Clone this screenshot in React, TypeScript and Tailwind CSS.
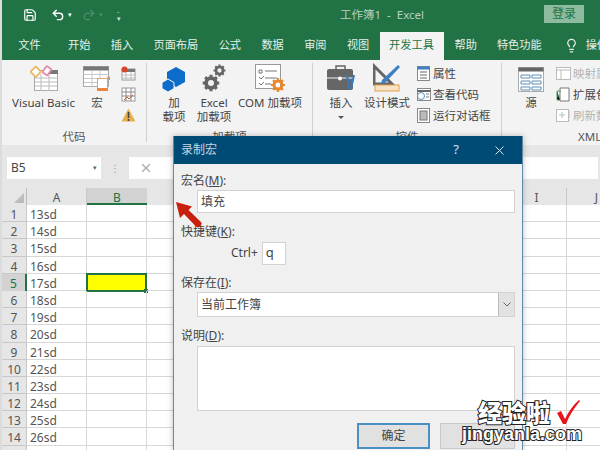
import { Lightbulb, Save, Undo2, Redo2, X } from "lucide-react";

const tabs = [
  { label: "文件", className: "mr-[7px]" },
  { label: "开始" },
  { label: "插入" },
  { label: "页面布局" },
  { label: "公式" },
  { label: "数据" },
  { label: "审阅" },
  { label: "视图" },
];

const rows = ["13sd", "14sd", "15sd", "16sd", "17sd", "18sd", "19sd", "20sd", "21sd", "22sd", "23sd", "24sd", "25sd", "26sd", "27sd"];
const cols = ["A", "B", "C", "D", "E", "F", "G", "H", "I", "J"];

function BigButton({ width, lines, icon, caret }: { width: string; lines: string[]; icon: React.ReactNode; caret?: boolean }) {
  return (
    <div className={`flex flex-col items-center shrink-0 ${width}`}>
      <div className="h-[33px] pb-[4px] flex items-end justify-center">{icon}</div>
      <div className="text-[11.5px] leading-[14px] text-[#444] text-center whitespace-nowrap">
        {lines.map((l) => (
          <div key={l}>{l}</div>
        ))}
      </div>
      {caret ? <div className="mt-[6px] w-0 h-0 border-x-[3px] border-t-[3px] border-x-transparent border-t-[#555]" /> : null}
    </div>
  );
}

function SmallRow({ icon, label, muted }: { icon: React.ReactNode; label: string; muted?: boolean }) {
  return (
    <div className={`flex items-center gap-[2px] h-[21px] text-[11.5px] whitespace-nowrap ${muted ? "text-[#b4b4b4]" : "text-[#444]"}`}>
      <div className="w-[15px] flex justify-center shrink-0">{icon}</div>
      <span>{label}</span>
    </div>
  );
}

function Group({ width, label, children }: { width: string; label: string; children: React.ReactNode }) {
  return (
    <div className={`flex flex-col shrink-0 my-[3px] h-[79px] border-r border-[#d0d0d0] ${width}`}>
      <div className="flex h-[66px] shrink-0">{children}</div>
      <div className="text-center text-[11.5px] leading-[16px] text-[#555] whitespace-nowrap">{label}</div>
    </div>
  );
}

function TableIcon() {
  return (
    <svg width="28" height="28" viewBox="0 0 28 28">
      <rect x="4.5" y="6.5" width="23" height="20" fill="#fff" stroke="#aaa" />
      <rect x="14" y="6" width="14" height="4" fill="#777" />
      <path d="M5 14h22M5 18h22M5 22h22M11 10v17M19 10v17" stroke="#bbb" />
      <rect x="2" y="4" width="7.5" height="7.5" rx="1" transform="rotate(45 5.75 7.75)" fill="#fff" stroke="#e8b866" strokeWidth="1.8" />
      <rect x="14" y="3" width="6" height="7.5" rx="1" transform="rotate(35 17 6.75)" fill="#fff" stroke="#e58aa6" strokeWidth="1.8" />
    </svg>
  );
}

function MacroIcon() {
  return (
    <svg width="28" height="26" viewBox="0 0 28 26">
      <rect x="0.5" y="0.5" width="25" height="20" fill="#fff" stroke="#aaa" />
      <rect x="0.5" y="0.5" width="25" height="4" fill="#777" />
      <path d="M1 8.5h24M1 12.5h24M1 16.5h24M9 5v16M17 5v16" stroke="#c8c8c8" />
      <rect x="14.5" y="12.5" width="10" height="12" fill="#fff" stroke="#e8a060" />
      <rect x="14" y="22" width="11" height="3" fill="#e8843c" />
      <path d="M24 11h2.5v3" stroke="#e8843c" fill="none" />
    </svg>
  );
}

function GearIcon({ size, color }: { size: number; color: string }) {
  return (
    <svg width={size} height={size} viewBox="0 0 24 24">
      <circle cx="12" cy="12" r="6.5" fill="none" stroke={color} strokeWidth="5" />
      <path d="M12 1v22M1 12h22M4.2 4.2l15.6 15.6M19.8 4.2L4.2 19.8" stroke={color} strokeWidth="4" strokeDasharray="4.4 13.2" />
    </svg>
  );
}

function App() {
  return (
    <div className="relative w-[600px] h-[450px] overflow-hidden bg-white font-['Noto_Sans','Noto_Sans_CJK_SC',sans-serif] flex">
      <div className="w-[2px] shrink-0 bg-[#dcdcdc]" />
      <div className="flex-1 min-w-0 flex flex-col">
        {/* title bar */}
        <div className="h-[30px] bg-[#217346] flex items-center shrink-0 relative text-white">
          <Save size={14} className="ml-[21px]" strokeWidth={2} />
          <Undo2 size={14} className="ml-[14px]" strokeWidth={2.4} />
          <span className="ml-[3px] text-[7px]">▾</span>
          <Redo2 size={14} className="ml-[10px] text-[#4f9069]" strokeWidth={2} />
          <span className="ml-[3px] text-[7px] text-[#4f9069]">▾</span>
          <span className="ml-[14px] text-[7px] leading-[7px] text-[#cfe0d5]">
            -<br />▾
          </span>
          <div className="absolute left-[338px] text-[11.5px] text-[#b5d2c0] whitespace-nowrap">工作簿1&nbsp; -&nbsp; Excel</div>
          <div className="absolute left-[542px] top-[5px] w-[40px] h-[18px] bg-[#8dbb9f] text-[#217346] text-[12px] leading-[18px] text-center">登录</div>
        </div>
        {/* tabs */}
        <div className="h-[30px] bg-[#217346] flex items-end shrink-0 pl-[6px] text-[11.2px] text-[#e6f0ea] whitespace-nowrap overflow-hidden">
          {tabs.map((t) => (
            <div key={t.label} className={`shrink-0 h-[28px] leading-[26px] px-[10.2px] ${t.className ?? ""}`}>
              {t.label}
            </div>
          ))}
          <div className="shrink-0 h-[28px] leading-[26px] w-[64px] text-center bg-[#f3f3f3] text-[#217346]">开发工具</div>
          <div className="shrink-0 h-[28px] leading-[26px] px-[11px]">帮助</div>
          <div className="shrink-0 h-[28px] leading-[26px] px-[9px]">特色功能</div>
          <div className="shrink-0 h-[28px] flex items-center pb-[2px] pl-[13px] gap-[7px]">
            <Lightbulb size={15} />
            <span>操作</span>
          </div>
        </div>
        {/* ribbon */}
        <div className="h-[85px] bg-[#f3f3f3] flex shrink-0 overflow-hidden">
          <Group width="w-[145px]" label="代码">
            <BigButton width="w-[75px] ml-[4px]" lines={["Visual Basic"]} icon={<TableIcon />} />
            <BigButton width="w-[32px]" lines={["宏"]} icon={<MacroIcon />} />
            <div className="flex flex-col gap-[6px] pt-[3px] ml-[8px]">
              <svg width="15" height="15" viewBox="0 0 15 15">
                <rect x="1" y="3" width="13" height="11" fill="#fff" stroke="#999" />
                <rect x="1" y="3" width="13" height="3" fill="#777" />
                <path d="M1 9h13M1 12h13M5 6v8M10 6v8" stroke="#bbb" />
                <circle cx="3.5" cy="3.5" r="3" fill="#d9472b" />
              </svg>
              <svg width="15" height="15" viewBox="0 0 15 15">
                <rect x="1" y="1" width="13" height="13" fill="#fff" stroke="#999" />
                <path d="M1 5h13M1 9h13M5 1v13M10 1v13" stroke="#888" />
                <path d="M3 13l3-3 2 2 4-4" stroke="#c9572b" fill="none" />
              </svg>
              <svg width="15" height="14" viewBox="0 0 15 14">
                <path d="M7.5 0.5L14.5 13.5H0.5Z" fill="#e8b04a" />
                <path d="M7.5 4v6M7.5 11v2" stroke="#444" strokeWidth="1.6" />
              </svg>
            </div>
          </Group>
          <Group width="w-[166px]" label="加载项">
            <BigButton
              width="w-[50px] ml-[2px]"
              lines={["加", "载项"]}
              icon={
                <svg width="24" height="25" viewBox="0 0 24 25">
                  <path d="M14 0l9 5v10l-9 5-9-5V5z" fill="#0b6dc9" />
                  <path d="M6 12l6 3.5v6L6 25l-6-3.5v-6z" fill="#0b6dc9" stroke="#f3f3f3" strokeWidth="1" />
                </svg>
              }
            />
            <BigButton
              width="w-[30px]"
              lines={["Excel", "加载项"]}
              icon={
                <div className="relative w-[24px] h-[28px]">
                  <div className="absolute right-0 top-0">
                    <GearIcon size={13} color="#666" />
                  </div>
                  <div className="absolute left-0 bottom-0">
                    <GearIcon size={18} color="#666" />
                  </div>
                </div>
              }
            />
            <BigButton
              width="w-[64px] ml-[9px]"
              lines={["COM 加载项"]}
              icon={
                <svg width="30" height="28" viewBox="0 0 30 28">
                  <rect x="0.5" y="0.5" width="25" height="24" fill="#fff" stroke="#999" />
                  <path d="M4 6h3v3H4zM10 7h12M4 13l2 2 3-3M10 14h12M4 19l2 2 3-3M10 20h6" fill="none" stroke="#777" />
                  <circle cx="23" cy="21" r="4" fill="none" stroke="#e8872c" strokeWidth="3" />
                  <path d="M23 14v14M16 21h14M18 16l10 10M28 16L18 26" stroke="#e8872c" strokeWidth="2.2" strokeDasharray="2.4 9.2" />
                </svg>
              }
            />
          </Group>
          <Group width="w-[189px]" label="控件">
            <BigButton
              width="w-[50px] ml-[3px]"
              lines={["插入"]}
              caret
              icon={
                <svg width="30" height="27" viewBox="0 0 30 27">
                  <path d="M10 4V1h9v3" fill="none" stroke="#666" strokeWidth="1.5" />
                  <rect x="1" y="4" width="26" height="21" rx="2" fill="#666" />
                  <path d="M1 13h26" stroke="#f3f3f3" />
                  <circle cx="14" cy="13.5" r="2" fill="#fff" />
                  <path d="M21 10l2 14M28 10l-3 14M21 15h7" stroke="#3a78b8" strokeWidth="2" />
                </svg>
              }
            />
            <BigButton
              width="w-[42px]"
              lines={["设计模式"]}
              icon={
                <svg width="28" height="29" viewBox="0 0 28 29">
                  <path d="M1 3L1 21H19Z" fill="none" stroke="#666" strokeWidth="3" />
                  <path d="M9 17L25 2l2 2-15 16-4 1z" fill="#3f7fc4" />
                  <rect x="2" y="22" width="24" height="6" fill="#f6e3c4" stroke="#e0a050" />
                </svg>
              }
            />
            <div className="flex flex-col ml-[8px]">
              <SmallRow
                label="属性"
                icon={
                  <svg width="13" height="15" viewBox="0 0 13 15">
                    <rect x="0.5" y="0.5" width="12" height="14" fill="#fff" stroke="#888" />
                    <rect x="0.5" y="0.5" width="12" height="3" fill="#3f7fc4" />
                    <path d="M3 6h7M3 9h7M3 12h7" stroke="#666" />
                  </svg>
                }
              />
              <SmallRow
                label="查看代码"
                icon={
                  <svg width="15" height="15" viewBox="0 0 15 15">
                    <rect x="1.5" y="1.5" width="13" height="12" fill="#fff" stroke="#888" />
                    <path d="M1.5 4h13" stroke="#666" strokeWidth="2" />
                    <circle cx="5" cy="9" r="3.5" fill="#fff" stroke="#5d8fb8" />
                    <path d="M10 7h3M10 10h3" stroke="#777" />
                  </svg>
                }
              />
              <SmallRow
                label="运行对话框"
                icon={
                  <svg width="13" height="15" viewBox="0 0 13 15">
                    <rect x="0.5" y="0.5" width="12" height="14" fill="#fff" stroke="#888" />
                    <rect x="3" y="3" width="7" height="9" fill="#bbb" stroke="#777" />
                  </svg>
                }
              />
            </div>
          </Group>
          <div className="flex flex-col flex-1 min-w-0 overflow-hidden">
            <div className="flex h-[69px] shrink-0 pt-[3px]">
              <BigButton
                width="w-[50px] ml-[4px]"
                lines={["源"]}
                icon={
                  <svg width="26" height="25" viewBox="0 0 26 25">
                    <rect x="0.5" y="0.5" width="25" height="24" fill="#fff" stroke="#aaa" />
                    <rect x="0.5" y="0.5" width="25" height="4" fill="#666" />
                    <path d="M3 8h9v3H3zM3 14h9v3H3zM3 20h9v3H3zM14 8h9v3h-9zM14 14h9v3h-9zM14 20h9v3h-9z" fill="none" stroke="#5d8fb8" />
                  </svg>
                }
              />
              <div className="flex flex-col">
                <SmallRow
                  muted
                  label="映射属性"
                  icon={
                    <svg width="15" height="15" viewBox="0 0 15 15">
                      <rect x="0.5" y="1.5" width="14" height="12" fill="#fff" stroke="#bbb" />
                      <path d="M0.5 4h14M5 4v9" stroke="#bbb" />
                    </svg>
                  }
                />
                <SmallRow
                  label="扩展包"
                  icon={
                    <svg width="15" height="15" viewBox="0 0 15 15">
                      <path d="M4 1h9v13H4z" fill="#fff" stroke="#777" />
                      <path d="M1 4h4M1 4v9h3M1 9h3" stroke="#4b9a64" />
                    </svg>
                  }
                />
                <SmallRow
                  muted
                  label="刷新数据"
                  icon={
                    <svg width="15" height="15" viewBox="0 0 15 15">
                      <rect x="0.5" y="1.5" width="12" height="12" fill="#fff" stroke="#bbb" />
                      <path d="M3 7h6M6 4v6M13 3v7M13 12v1" stroke="#bbb" />
                    </svg>
                  }
                />
              </div>
            </div>
            <div className="pl-[76px] text-[11.5px] leading-[16px] text-[#555] whitespace-nowrap">XML</div>
          </div>
        </div>
        {/* formula bar */}
        <div className="h-[43px] bg-[#e6e6e6] shrink-0 flex pt-[12px] pr-[2px]">
          <div className="ml-[5px] w-[94px] h-[22px] bg-white flex items-center justify-between px-[4px] text-[12px] text-[#444]">
            <span>B5</span>
            <span className="text-[7px] text-[#666]">▾</span>
          </div>
          <div className="w-[28px] h-[22px] flex items-center justify-center text-[#999] text-[10px]">⋮</div>
          <div className="flex-1 h-[22px] bg-white flex items-center pl-[10px]">
            <X size={14} className="text-[#aaa]" />
          </div>
        </div>
        {/* grid */}
        <div className="flex flex-col flex-1 min-h-0 overflow-hidden">
          <div className="flex h-[17px] shrink-0 bg-[#e6e6e6] text-[12px] leading-[19px] text-[#555]">
            <div className="relative w-[25px] shrink-0 border-r border-[#bbb]">
              <div className="absolute right-[2px] bottom-[2px] w-0 h-0 border-l-[10px] border-b-[10px] border-l-transparent border-b-[#bcbcbc]" />
            </div>
            {cols.map((c) => (
              <div
                key={c}
                className={c === "B" ? "w-[60px] shrink-0 text-center bg-[#d2d2d2] text-[#217346] border-b-2 border-[#217346]" : "w-[60px] shrink-0 text-center border-r border-[#c8c8c8]"}
              >
                {c}
              </div>
            ))}
          </div>
          {rows.map((r, i) => (
            <div key={r} className="flex h-[17.2px] shrink-0 text-[12px] leading-[19px] text-[#555]">
              <div className={i === 4 ? "w-[25px] shrink-0 text-center bg-[#d2d2d2] text-[#217346] border-r-2 border-[#217346]" : "w-[25px] shrink-0 text-center bg-[#e6e6e6] border-r border-b border-[#c8c8c8]"}>
                {i + 1}
              </div>
              {cols.map((c) => (
                <div key={c} className="relative w-[60px] shrink-0 border-r border-b border-[#d8d8d8] pl-[3px]">
                  {c === "A" ? r : ""}
                  {c === "B" && i === 4 ? (
                    <div className="absolute -left-px -top-px w-[61px] h-[19px] bg-[#ffff00] border-2 border-[#217346]">
                      <div className="absolute -right-[3px] -bottom-[3px] w-[4px] h-[4px] bg-[#217346]" />
                    </div>
                  ) : null}
                </div>
              ))}
            </div>
          ))}
        </div>
      </div>

      {/* record macro dialog */}
      <div className="absolute left-[173px] top-[136px] w-[350px] h-[314px] bg-[#f0f0f0] border-x border-[#5f8aa5] flex flex-col text-[12px] text-[#444] shadow-[0_0_6px_rgba(0,0,0,0.25)]">
        <div className="h-[28px] shrink-0 bg-[#004b76] flex items-center pl-[7px] text-[#c5d7e2]">
          <span className="flex-1">录制宏</span>
          <span className="text-[13px] mr-[33px] text-[#d5e2ea]">?</span>
          <X size={15} strokeWidth={1.5} className="mr-[15px] text-[#e6eef3]" />
        </div>
        <div className="flex flex-col px-[7px]">
          <div className="h-[17px] mt-[8px] leading-[17px]">
            宏名(<span className="underline">M</span>):
          </div>
          <div className="ml-[16px] h-[23px] mt-[1px] w-[318px] bg-white border border-[#d2d2d2] pl-[3px] leading-[21px]">填充</div>
          <div className="h-[17px] mt-[10px] leading-[17px]">
            快捷键(<span className="underline">K</span>):
          </div>
          <div className="flex items-center h-[24px] ml-[50px] gap-[4px] mt-[1px]">
            <span>Ctrl+</span>
            <div className="w-[24px] h-[23px] bg-white border border-[#d2d2d2] pl-[3px] text-[13px] leading-[19px]">q</div>
          </div>
          <div className="h-[17px] mt-[9px] leading-[17px]">
            保存在(<span className="underline">I</span>):
          </div>
          <div className="ml-[16px] h-[25px] mt-[1px] w-[318px] bg-white border border-[#d2d2d2] flex justify-between pl-[3px] leading-[23px]">
            <span>当前工作簿</span>
            <span className="w-[16px] bg-[#e2e2e2] border-l border-[#bbb] flex items-center justify-center">
              <svg width="8" height="5" viewBox="0 0 8 5">
                <path d="M0.5 0.5L4 4l3.5-3.5" fill="none" stroke="#666" />
              </svg>
            </span>
          </div>
          <div className="h-[17px] mt-[10px] leading-[17px]">
            说明(<span className="underline">D</span>):
          </div>
          <div className="ml-[16px] h-[65px] mt-[2px] w-[318px] bg-white border border-[#d2d2d2]" />
          <div className="flex justify-end gap-[10px] mt-[12px]">
            <div className="w-[73px] h-[26px] bg-[#e1e1e1] border-2 border-[#4a90c2] text-center leading-[22px]">确定</div>
            <div className="w-[75px] h-[26px] bg-[#e1e1e1] border border-[#c8c8c8] text-center leading-[24px]">取消</div>
          </div>
        </div>
      </div>

      {/* red arrow */}
      <svg className="absolute left-[175px] top-[200px]" width="30" height="30" viewBox="0 0 30 30">
        <path d="M1 2L17 6.5L13.5 10L26 22Q27.5 23.5 26 25L24 27Q22.5 28 21 26.5L9 14L5 18Z" fill="#c8200f" />
      </svg>

      {/* watermark */}
      <div className="absolute left-[478px] top-[398px] flex items-center gap-[6px]">
        <span className="font-['Noto_Sans_CJK_SC',sans-serif] font-black text-[24px] leading-[28px] text-white [-webkit-text-stroke:2px_#222] [paint-order:stroke_fill]">经验啦</span>
        <svg width="24" height="26" viewBox="0 0 24 26">
          <path d="M1 14L5 12L9 20C13 12 17 6 23 1L24 2C18 9 13 17 10 25H7Z" fill="#e8141c" />
        </svg>
      </div>
      <div className="absolute left-[462px] top-[424px] font-['Liberation_Sans',sans-serif] font-bold text-[18px] leading-[20px] text-white [-webkit-text-stroke:2px_#222] [paint-order:stroke_fill]">jingyanla.com</div>
    </div>
  );
}

export default App;
